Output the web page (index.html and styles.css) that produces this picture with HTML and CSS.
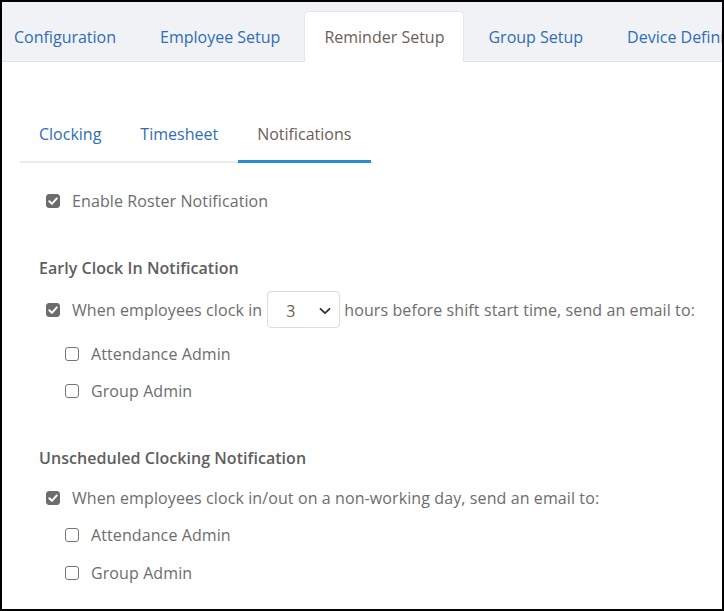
FILE: index.html
```html
<!DOCTYPE html>
<html>
<head>
<meta charset="utf-8">
<link rel="stylesheet" href="styles.css">
</head>
<body>
<div class="frame">
  <nav class="top-tabs">
    <a class="top-tab first">Configuration</a>
    <a class="top-tab">Employee Setup</a>
    <a class="top-tab active">Reminder Setup</a>
    <a class="top-tab">Group Setup</a>
    <a class="top-tab">Device Definition</a>
  </nav>
  <div class="panel">
    <nav class="sub-tabs">
      <a class="sub-tab">Clocking</a>
      <a class="sub-tab">Timesheet</a>
      <a class="sub-tab active">Notifications</a>
    </nav>

    <div class="row level1 roster">
      <span class="cb checked"><svg viewBox="0 0 14 14"><path d="M3.3 7.2 L5.9 9.8 L10.8 4.4" fill="none" stroke="#fff" stroke-width="2" stroke-linecap="round" stroke-linejoin="round"/></svg></span>
      <span>Enable Roster Notification</span>
    </div>

    <h3 class="section-title early">Early Clock In Notification</h3>
    <div class="row level1 select-row">
      <span class="cb checked"><svg viewBox="0 0 14 14"><path d="M3.3 7.2 L5.9 9.8 L10.8 4.4" fill="none" stroke="#fff" stroke-width="2" stroke-linecap="round" stroke-linejoin="round"/></svg></span>
      <span>When employees clock in</span>
      <span class="select"><span class="select-val">3</span><svg class="chev" viewBox="0 0 12 8"><path d="M1.5 1.8 L6 6.2 L10.5 1.8" fill="none" stroke="#333" stroke-width="1.8" stroke-linecap="round" stroke-linejoin="round"/></svg></span>
      <span>hours before shift start time, send an email to:</span>
    </div>
    <div class="row level2 first-sub">
      <span class="cb"></span><span>Attendance Admin</span>
    </div>
    <div class="row level2">
      <span class="cb"></span><span>Group Admin</span>
    </div>

    <h3 class="section-title unsched">Unscheduled Clocking Notification</h3>
    <div class="row level1 plain-row">
      <span class="cb checked"><svg viewBox="0 0 14 14"><path d="M3.3 7.2 L5.9 9.8 L10.8 4.4" fill="none" stroke="#fff" stroke-width="2" stroke-linecap="round" stroke-linejoin="round"/></svg></span>
      <span>When employees clock in/out on a non-working day, send an email to:</span>
    </div>
    <div class="row level2 tight">
      <span class="cb"></span><span>Attendance Admin</span>
    </div>
    <div class="row level2 last">
      <span class="cb"></span><span>Group Admin</span>
    </div>
  </div>
</div>
</body>
</html>
```
FILE: styles.css
```css
html, body {
  margin: 0;
  padding: 0;
  background: #000;
}
body {
  width: 724px;
  height: 611px;
  overflow: hidden;
  font-family: "Open Sans", "Noto Sans", sans-serif;
  font-size: 16px;
  color: #6d6d6d;
}
.frame {
  margin: 2px 2px 0 2px;
  width: 720px;
  height: 607px;
  background: #fff;
  overflow: hidden;
}
.top-tabs {
  display: flex;
  height: 59px;
  background: #f1f2f6;
  border-bottom: 1px solid #dfe2e8;
  margin-left: -8px;
  white-space: nowrap;
  align-items: flex-end;
}
.top-tab {
  flex: none;
  display: flex;
  align-items: center;
  height: 49px;
  padding: 0 19px 1px 19px;
  margin-right: 4px;
  border: 1px solid transparent;
  border-bottom: none;
  border-radius: 5px 5px 0 0;
  color: #2f6db5;
  margin-bottom: -1px;
}
.top-tab.active {
  background: #fff;
  border-color: #e3e6eb;
  color: #6b5e55;
}
.panel {
  padding: 48px 0 0 18px;
}
.sub-tabs {
  display: flex;
  width: 353px;
  border-bottom: 2px solid #ebebeb;
  height: 51px;
  align-items: stretch;
}
.sub-tab {
  padding: 0 20px 3px 19px;
  display: flex;
  align-items: center;
  color: #2f6db5;
  border-bottom: 3px solid transparent;
  margin-bottom: -2px;
}
.sub-tab.active {
  color: #6b5e55;
  border-bottom-color: #2a8ccf;
}
.row {
  display: flex;
  align-items: center;
  white-space: nowrap;
  letter-spacing: 0.1px;
}
.level1 {
  padding-left: 26px;
}
.level1 .cb {
  margin-right: 12px;
}
.level2 {
  padding-left: 45px;
  height: 37px;
}
.level2 .cb {
  margin-right: 12px;
}
.roster {
  margin-top: 23px;
  height: 30px;
}
.cb {
  flex: none;
  width: 14px;
  height: 14px;
  box-sizing: border-box;
  border: 1px solid #767676;
  border-radius: 3px;
  background: #fff;
  display: flex;
}
.cb.checked {
  background: #6c6c6c;
  border-color: #6c6c6c;
}
.cb svg {
  width: 14px;
  height: 14px;
  margin: -1px;
}
.section-title {
  margin: 0;
  font-size: 16px;
  font-weight: 600;
  color: #5e5e5e;
  padding-left: 19px;
  height: 24px;
  line-height: 24px;
  letter-spacing: 0.05px;
}
.early {
  margin-top: 40px;
}
.select-row {
  margin-top: 11px;
  height: 37px;
}
.select {
  flex: none;
  display: flex;
  align-items: center;
  justify-content: space-between;
  box-sizing: border-box;
  width: 73px;
  height: 37px;
  margin: 0 4px 0 5px;
  padding: 3px 8px 0 18px;
  border: 1px solid #dcdcdc;
  border-radius: 4px;
  color: #6b5e55;
}
.chev {
  width: 12px;
  height: 8px;
}
.first-sub {
  margin-top: 7px;
}
.unsched {
  margin-top: 37px;
}
.plain-row {
  margin-top: 15px;
  height: 26px;
}
.tight {
  margin-top: 5px;
}
.last {
  margin-top: 1px;
}
```
